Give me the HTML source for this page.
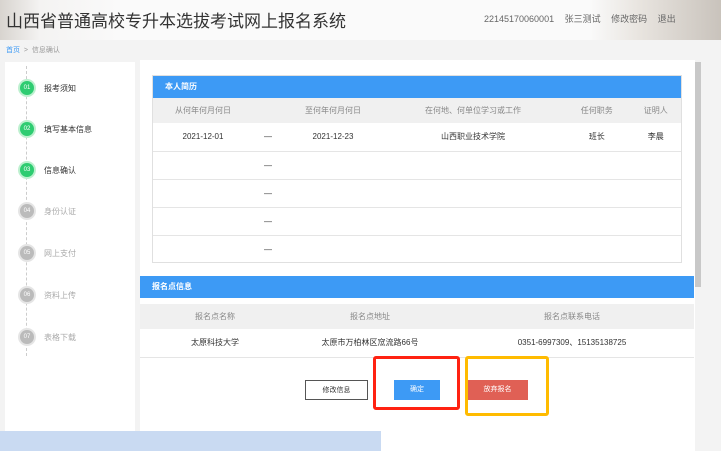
<!DOCTYPE html>
<html><head><meta charset="utf-8"><style>
*{margin:0;padding:0;box-sizing:border-box}
body{width:721px;height:451px;overflow:hidden;background:#f3f3f3;font-family:"Liberation Sans","Noto Sans CJK SC",sans-serif;position:relative;color:#333}
.abs{position:absolute}
.hdr{left:0;top:0;width:721px;height:40px;background:linear-gradient(90deg,#d8d4cf 0,#f4f3f2 40px,#fafafa 120px,#fafafa 590px,#e8e4df 640px,#c9c3bc 721px)}
.title{left:6px;top:7px;font-size:17px;color:#333}
.user{left:484px;top:12px;font-size:9px;color:#666;word-spacing:8px}
.bc{left:6px;top:45px;font-size:7px;color:#999}
.side{left:5px;top:62px;width:130px;height:389px;background:#fff}
.line{left:26px;top:66px;width:0;height:290px;border-left:1px dashed #ccc}
.step{left:20px;width:14px;height:14px;border-radius:50%;font-size:6px;color:#fff;text-align:center;line-height:14px;background:#bbb;box-shadow:0 0 0 2px #e5e5e5}
.step.on{background:#2ecc71;box-shadow:0 0 0 2px #bdf0cf}
.st{left:44px;font-size:8px;color:#aaa}
.st.on{color:#333}
.main{left:140px;top:60px;width:555px;height:391px;background:#fff}
.bar{background:#3d9af5;color:#fff;font-size:8px;font-weight:bold;padding-left:12px;line-height:22px}
table{border-collapse:collapse;font-size:8px;text-align:center}
td{height:28px;border-bottom:1px solid #e5e5e5}
th{font-weight:normal;color:#888;background:#f0f0f0;height:25px}
.btn{height:20px;font-size:7px;line-height:20px;text-align:center;top:380px}
</style></head><body>
<div class="abs hdr"></div>
<div class="abs title">山西省普通高校专升本选拔考试网上报名系统</div>
<div class="abs user">22145170060001 张三测试 修改密码 退出</div>
<div class="abs bc"><span style="color:#3d9af5">首页</span> &nbsp;&gt;&nbsp; 信息确认</div>
<div class="abs side"></div>
<div class="abs line"></div>
<div class="abs step on" style="top:81px">01</div><div class="abs st on" style="top:83px">报考须知</div>
<div class="abs step on" style="top:122px">02</div><div class="abs st on" style="top:124px">填写基本信息</div>
<div class="abs step on" style="top:163px">03</div><div class="abs st on" style="top:165px">信息确认</div>
<div class="abs step" style="top:204px">04</div><div class="abs st" style="top:206px">身份认证</div>
<div class="abs step" style="top:246px">05</div><div class="abs st" style="top:248px">网上支付</div>
<div class="abs step" style="top:288px">06</div><div class="abs st" style="top:290px">资料上传</div>
<div class="abs step" style="top:330px">07</div><div class="abs st" style="top:332px">表格下载</div>
<div class="abs main"></div>
<div class="abs" style="left:152px;top:75px;width:530px;height:188px;border:1px solid #e0e0e0;background:#fff">
<div class="bar">本人简历</div>
<table style="width:528px">
<tr><th style="width:100px">从何年何月何日</th><th style="width:30px"></th><th style="width:100px">至何年何月何日</th><th style="width:180px">在何地、何单位学习或工作</th><th>任何职务</th><th>证明人</th></tr>
<tr><td>2021-12-01</td><td>—</td><td>2021-12-23</td><td>山西职业技术学院</td><td>班长</td><td>李晨</td></tr>
<tr><td></td><td>—</td><td></td><td></td><td></td><td></td></tr>
<tr><td></td><td>—</td><td></td><td></td><td></td><td></td></tr>
<tr><td></td><td>—</td><td></td><td></td><td></td><td></td></tr>
<tr><td style="border:0"></td><td style="border:0">—</td><td style="border:0"></td><td style="border:0"></td><td style="border:0"></td><td style="border:0"></td></tr>
</table></div>
<div class="abs" style="left:140px;top:276px;width:554px">
<div class="bar">报名点信息</div>
<table style="width:554px;margin-top:6px">
<tr><th style="width:150px">报名点名称</th><th style="width:160px">报名点地址</th><th>报名点联系电话</th></tr>
<tr><td>太原科技大学</td><td>太原市万柏林区窊流路66号</td><td>0351-6997309、15135138725</td></tr>
</table></div>
<div class="abs btn" style="left:305px;width:63px;border:1px solid #555;background:#fff">修改信息</div>
<div class="abs btn" style="left:394px;width:46px;background:#3d9af5;color:#fff">确定</div>
<div class="abs btn" style="left:467px;width:61px;background:#e06055;color:#fff">放弃报名</div>
<div class="abs" style="left:373px;top:356px;width:87px;height:54px;border:3px solid #f21;border-radius:3px"></div>
<div class="abs" style="left:465px;top:356px;width:84px;height:60px;border:3px solid #fb0;border-radius:3px"></div>
<div class="abs" style="left:0;top:431px;width:381px;height:20px;background:#c9daf2"></div>
<div class="abs" style="left:695px;top:62px;width:6px;height:225px;background:#c8c8c8"></div>
</body></html>
